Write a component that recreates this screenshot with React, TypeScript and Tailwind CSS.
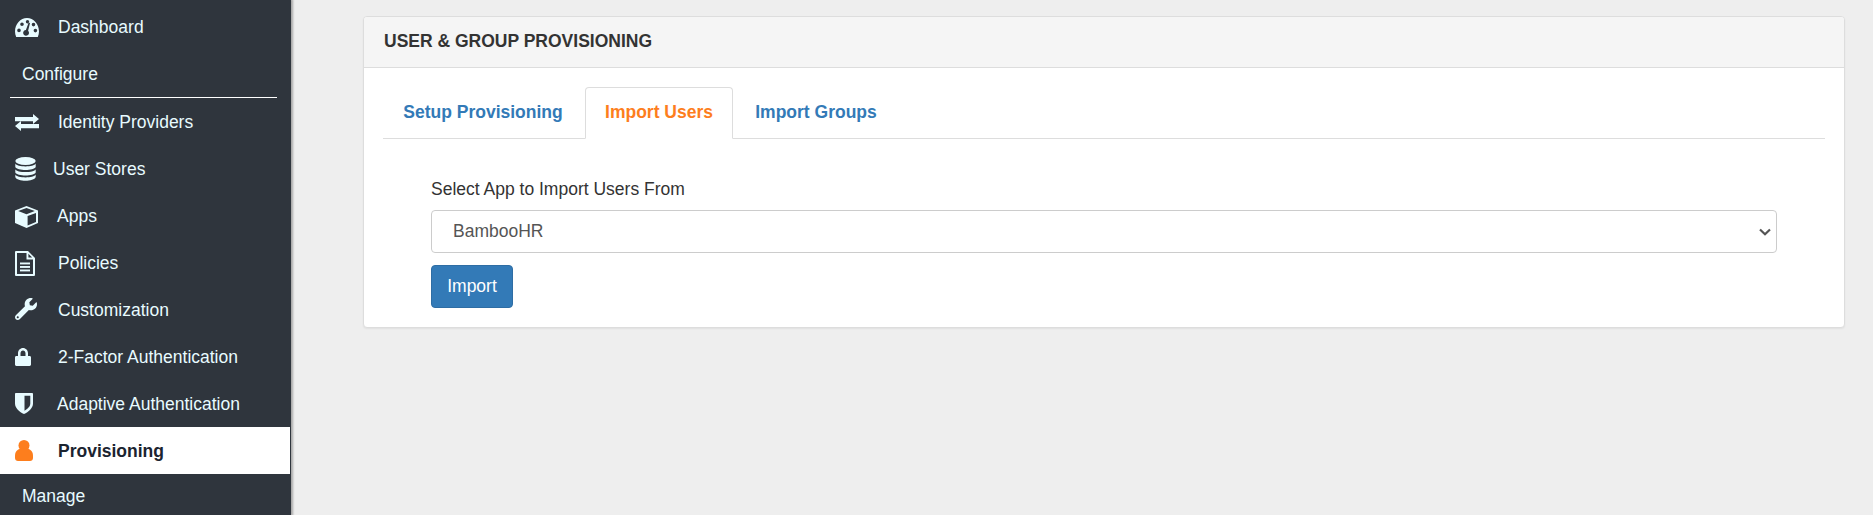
import React from "react";
import { FaWrench } from "react-icons/fa";

function DashboardIcon() {
  return (
    <svg width="24" height="19" viewBox="0 0 24 19" fill="currentColor" fillRule="evenodd">
      <path d="M1.2 19C.4 17.4 0 15.6 0 13.6 0 6.1 5.4 0 12 0s12 6.1 12 13.6c0 2-.4 3.8-1.2 5.4H1.2ZM4 10.6a1.8 1.8 0 1 0 0 3.6 1.8 1.8 0 0 0 0-3.6ZM7 4.4a1.8 1.8 0 1 0 0 3.6 1.8 1.8 0 0 0 0-3.6ZM12.5 2a1.7 1.7 0 1 0 0 3.4 1.7 1.7 0 0 0 0-3.4ZM18.5 4.8a1.8 1.8 0 1 0 0 3.6 1.8 1.8 0 0 0 0-3.6ZM20.4 10.8a1.8 1.8 0 1 0 0 3.6 1.8 1.8 0 0 0 0-3.6ZM13.7 4.6 10.9 12a2.9 2.9 0 1 0 2.2.8l1.9-7.8-1.3-.4Z" />
    </svg>
  );
}

function TransferIcon() {
  return (
    <svg width="24" height="17" viewBox="0 0 24 17" fill="currentColor" className="mt-[2px]">
      <path d="M18 0 24 5 18 10V7.300H0V3H18V0Z" />
      <path d="M6 7 0 12 6 17V14.300H24V10H6V7Z" />
    </svg>
  );
}

function DatabaseIcon() {
  return (
    <svg width="21" height="24" viewBox="0 0 21 24" fill="currentColor" className="mt-px">
      <ellipse cx="10.500" cy="4" rx="10.200" ry="4" />
      <path d="M.3 6.600C2 10.400 19 10.400 20.700 6.600V10C19 14 2 14 .3 10V6.600Z" />
      <path d="M.3 12.200C2 16 19 16 20.700 12.200V15.400C19 19.400 2 19.400 .3 15.400V12.200Z" />
      <path d="M.3 17.600C2 21.400 19 21.400 20.700 17.600V20C19 25 2 25 .3 20V17.600Z" />
    </svg>
  );
}

function CubeIcon() {
  return (
    <svg width="23" height="22" viewBox="0 0 23 22" fill="currentColor" fillRule="evenodd" className="mt-[3px]">
      <path d="M11.500 0 23 4.500V17L11.500 22 0 17V4.500L11.500 0ZM11.500 2 3.200 5.100 11.500 8.300 19.800 5.100 11.500 2ZM12.600 10V19.600L21 16V6.900L12.600 10Z" />
    </svg>
  );
}

function FileIcon() {
  return (
    <svg width="20" height="25" viewBox="0 0 20 25" fill="currentColor" fillRule="evenodd" className="mt-[2px]">
      <path d="M1 0H13L20 7V24A1 1 0 0 1 19 25H1A1 1 0 0 1 0 24V1A1 1 0 0 1 1 0ZM2 2V23H18V8.500H11.500V2H2ZM13.400 2.800V6.600H17.200L13.400 2.800Z" />
      <rect x="5" y="11.500" width="10" height="1.900" />
      <rect x="5" y="15" width="10" height="1.900" />
      <rect x="5" y="18.500" width="10" height="1.900" />
    </svg>
  );
}

function LockIcon() {
  return (
    <svg width="16" height="18" viewBox="0 0 16 18" fill="currentColor" fillRule="evenodd">
      <path d="M3 8V5.200C3 2.300 5.200 0 8 0s5 2.300 5 5.200V8h1.600c.8 0 1.400.6 1.400 1.400v7.200c0 .8-.6 1.400-1.400 1.400H1.400C.6 18 0 17.400 0 16.600V9.400C0 8.600.6 8 1.400 8H3ZM5.500 8h5V5.200C10.500 3.700 9.400 2.500 8 2.500S5.500 3.700 5.500 5.200V8Z" />
    </svg>
  );
}

function ShieldIcon() {
  return (
    <svg width="18" height="21" viewBox="0 0 18 21" fill="currentColor" fillRule="evenodd">
      <path d="M.8 0H17.200C17.600 0 18 .4 18 .8V10.500C18 15 13.500 19 9 21 4.500 19 0 15 0 10.500V.8C0 .4.400 0 .8 0ZM9.500 2.800V17.800C12.500 16 15.300 13.500 15.300 10.500V2.800H9.500Z" />
    </svg>
  );
}

function UserIcon() {
  return (
    <svg width="18" height="21" viewBox="0 0 18 21" fill="currentColor">
      <circle cx="9" cy="5.500" r="5.500" />
      <path d="M5.500 8.800H12.500C15.800 9.300 18 12 18 15.500V18C18 19.700 16.700 21 15 21H3C1.300 21 0 19.700 0 18V15.500C0 12 2.200 9.300 5.500 8.800Z" />
    </svg>
  );
}

type Row = { label: string; icon: React.ReactNode; box: string };

const rows: Row[] = [
  { label: "Identity Providers", icon: <TransferIcon />, box: "w-[43px]" },
  { label: "User Stores", icon: <DatabaseIcon />, box: "w-[38px]" },
  { label: "Apps", icon: <CubeIcon />, box: "w-[42px]" },
  { label: "Policies", icon: <FileIcon />, box: "w-[43px]" },
  { label: "Customization", icon: <FaWrench className="w-[22px] h-[22px] -mt-[2px]" />, box: "w-[43px]" },
  { label: "2-Factor Authentication", icon: <LockIcon />, box: "w-[43px]" },
  { label: "Adaptive Authentication", icon: <ShieldIcon />, box: "w-[42px]" },
];

function NavRow({ label, icon, box }: Row) {
  return (
    <div className="h-[47px] flex items-center text-[#e8fbff] pl-[15px]">
      <span className={`${box} shrink-0 flex items-center`}>{icon}</span>
      <span className="pt-[2px]">{label}</span>
    </div>
  );
}

export default function App() {
  return (
    <div className="h-[515px] w-full overflow-hidden flex bg-[#eeeeee] text-[17.5px] font-['Liberation_Sans',Arial,sans-serif]">
      <aside className="w-[291px] shrink-0 h-full bg-[#2f353d] shadow-[1px_0_2px_1px_#a8a8a8] pt-[4px] overflow-hidden">
        <div className="h-[47px] flex items-center text-[#e8fbff] pl-[15px]">
          <span className="w-[43px] shrink-0 flex items-center"><DashboardIcon /></span>
          <span>Dashboard</span>
        </div>
        <div className="h-[46px] flex items-center pl-[22px] text-[#e8fbff]">Configure</div>
        <div className="ml-[10px] w-[267px] h-px bg-white" />
        {rows.map((r) => (
          <NavRow key={r.label} {...r} />
        ))}
        <div className="h-[47px] w-[290px] flex items-center bg-white pl-[15px] font-bold text-[#1b2430]">
          <span className="w-[43px] shrink-0 flex items-center text-[#fd7e1d]">
            <UserIcon />
          </span>
          <span className="pt-[2px]">Provisioning</span>
        </div>
        <div className="h-[44px] flex items-center pl-[22px] text-[#e8fbff]">Manage</div>
      </aside>
      <main className="flex-1 pl-[72px] pr-[28px] pt-[16px]">
        <section className="h-[312px] bg-white rounded-[4px] border border-[#dddddd] shadow-[0_1px_2px_rgba(0,0,0,0.06)] overflow-hidden">
          <header className="h-[51px] bg-[#f5f5f5] border-b border-[#dddddd] pl-[20px] pb-[2px] flex items-center font-bold text-[#333333]">
            USER &amp; GROUP PROVISIONING
          </header>
          <div className="px-[19px] pt-[19px]">
            <div className="h-[52px] flex gap-[2px] border-b border-[#dddddd]">
              <div className="h-[52px] w-[200px] pb-[2px] flex items-center justify-center font-bold text-[#337ab7]">Setup Provisioning</div>
              <div className="h-[52px] w-[148px] pb-[2px] flex items-center justify-center font-bold text-[#fd7e1d] bg-white border border-[#dddddd] border-b-white rounded-t-[4px]">Import Users</div>
              <div className="h-[52px] w-[162px] pb-[2px] flex items-center justify-center font-bold text-[#337ab7]">Import Groups</div>
            </div>
            <div className="px-[48px] pt-[39px]">
              <div className="h-[22px] leading-[22px] text-[#333333]">Select App to Import Users From</div>
              <div className="relative mt-[10px]">
                <select className="block w-full h-[43px] appearance-none bg-white border border-[#cccccc] rounded-[4px] pl-[21px] text-[#555555] outline-none">
                  <option>BambooHR</option>
                </select>
                <svg width="12" height="8" viewBox="0 0 12 8" fill="none" className="absolute right-[6px] top-[18px] pointer-events-none text-[#555555]">
                  <path d="M1 1.500 6 6.300 11 1.500" stroke="currentColor" strokeWidth="2.200" />
                </svg>
              </div>
              <button className="mt-[12px] block w-[82px] h-[43px] bg-[#337ab7] border border-[#2e6da4] rounded-[4px] text-white">Import</button>
            </div>
          </div>
        </section>
      </main>
    </div>
  );
}
